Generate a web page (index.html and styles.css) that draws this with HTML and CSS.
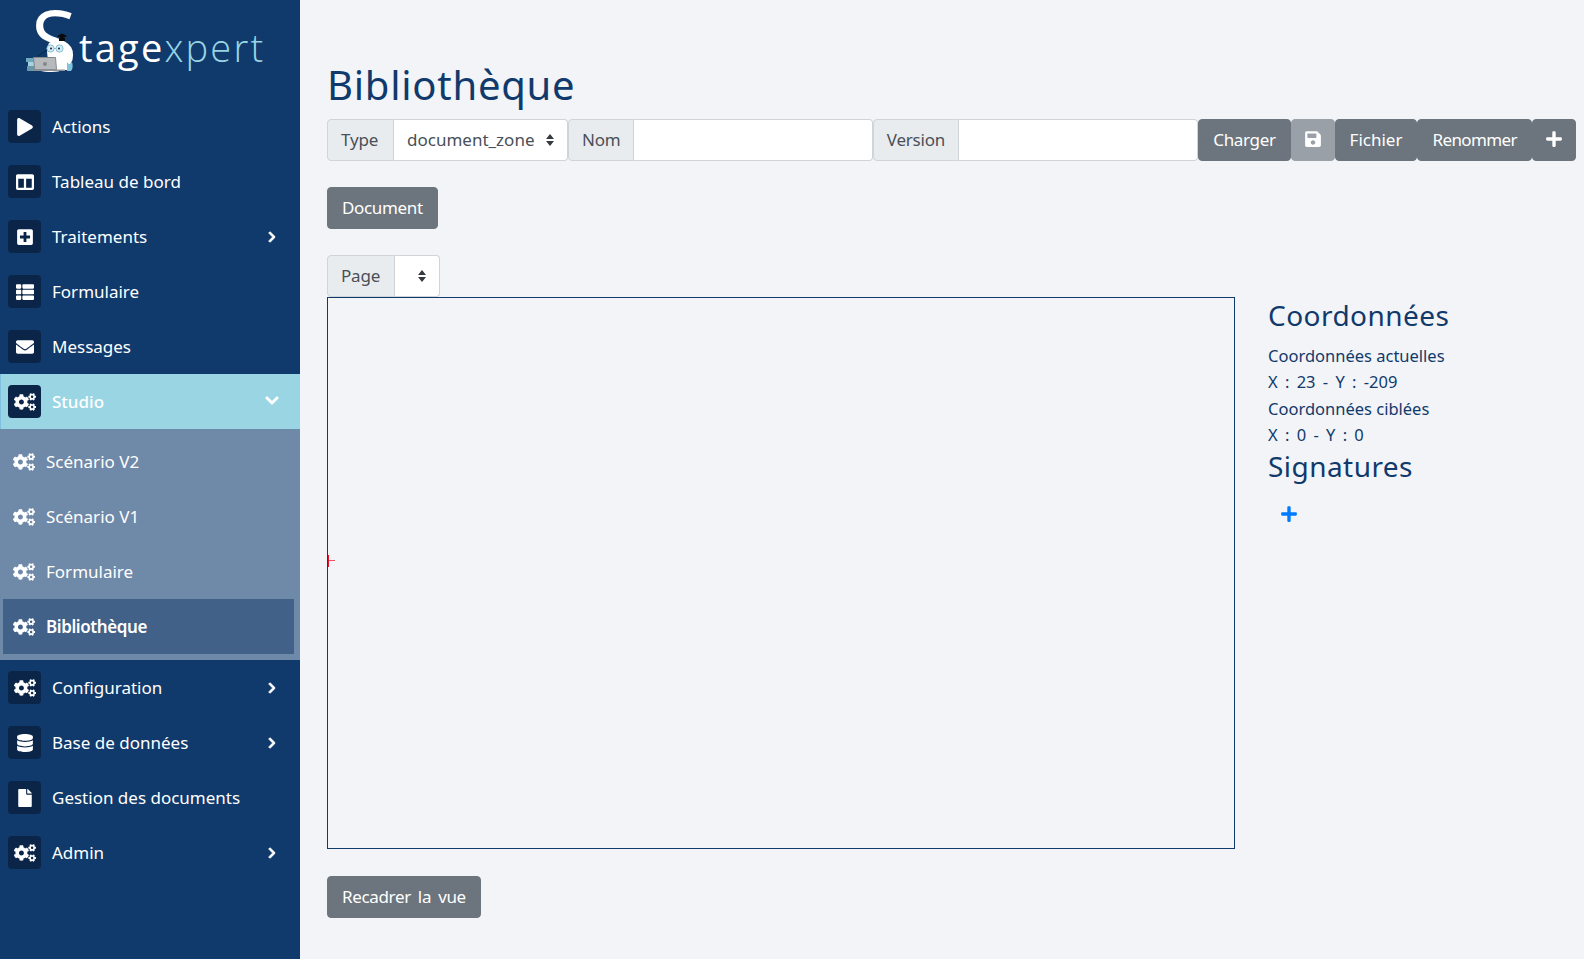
FILE: index.html
```html
<!DOCTYPE html>
<html lang="fr">
<head>
<meta charset="utf-8">
<title>Bibliothèque</title>
<link rel="stylesheet" href="styles.css">
</head>
<body>
<svg class="defs" width="0" height="0" aria-hidden="true">
  <symbol id="i-play" viewBox="0 0 448 512"><path d="M424.4 214.7L72.4 6.6C43.8-10.3 0 6.1 0 47.9V464c0 37.5 40.7 60.1 72.4 41.3l352-208c31.4-18.5 31.5-64.1 0-82.6z"/></symbol>
  <symbol id="i-columns" viewBox="0 0 512 512"><path d="M464 32H48C21.49 32 0 53.49 0 80v352c0 26.51 21.49 48 48 48h416c26.51 0 48-21.49 48-48V80c0-26.51-21.49-48-48-48zM224 416H64V160h160v256zm224 0H288V160h160v256z"/></symbol>
  <symbol id="i-plus-square" viewBox="0 0 448 512"><path d="M400 32H48C21.5 32 0 53.5 0 80v352c0 26.5 21.5 48 48 48h352c26.5 0 48-21.5 48-48V80c0-26.5-21.5-48-48-48zm-32 252c0 6.6-5.4 12-12 12h-92v92c0 6.6-5.4 12-12 12h-56c-6.6 0-12-5.4-12-12v-92H92c-6.6 0-12-5.4-12-12v-56c0-6.6 5.4-12 12-12h92v-92c0-6.6 5.4-12 12-12h56c6.6 0 12 5.4 12 12v92h92c6.6 0 12 5.4 12 12v56z"/></symbol>
  <symbol id="i-list" viewBox="0 0 512 512"><path d="M149.333 216v80c0 13.255-10.745 24-24 24H24c-13.255 0-24-10.745-24-24v-80c0-13.255 10.745-24 24-24h101.333c13.255 0 24 10.745 24 24zM0 376v80c0 13.255 10.745 24 24 24h101.333c13.255 0 24-10.745 24-24v-80c0-13.255-10.745-24-24-24H24c-13.255 0-24 10.745-24 24zM125.333 32H24C10.745 32 0 42.745 0 56v80c0 13.255 10.745 24 24 24h101.333c13.255 0 24-10.745 24-24V56c0-13.255-10.745-24-24-24zm80 448H488c13.255 0 24-10.745 24-24v-80c0-13.255-10.745-24-24-24H205.333c-13.255 0-24 10.745-24 24v80c0 13.255 10.745 24 24 24zm-24-424v80c0 13.255 10.745 24 24 24H488c13.255 0 24-10.745 24-24V56c0-13.255-10.745-24-24-24H205.333c-13.255 0-24 10.745-24 24zm24 264H488c13.255 0 24-10.745 24-24v-80c0-13.255-10.745-24-24-24H205.333c-13.255 0-24 10.745-24 24v80c0 13.255 10.745 24 24 24z"/></symbol>
  <symbol id="i-envelope" viewBox="0 0 512 512"><path d="M502.3 190.8c3.9-3.1 9.7-.2 9.7 4.7V400c0 26.5-21.5 48-48 48H48c-26.5 0-48-21.5-48-48V195.6c0-5 5.7-7.8 9.7-4.7 22.4 17.4 52.1 39.5 154.1 113.6 21.1 15.4 56.7 47.8 92.2 47.6 35.7.3 72-32.8 92.3-47.6 102-74.1 131.6-96.3 154-113.7zM256 320c23.2.4 56.6-29.2 73.4-41.4 132.7-96.3 142.8-104.7 173.4-128.7 5.8-4.5 9.2-11.5 9.2-18.9v-19c0-26.5-21.5-48-48-48H48C21.5 64 0 85.5 0 112v19c0 7.4 3.4 14.3 9.2 18.9 30.6 23.9 40.7 32.4 173.4 128.7 16.8 12.2 50.2 41.8 73.4 41.4z"/></symbol>
  <symbol id="i-cogs" viewBox="0 0 640 512"><path d="M512.1 191l-8.2 14.3c-3 5.3-9.4 7.5-15.1 5.4-11.8-4.4-22.6-10.7-32.1-18.6-4.6-3.8-5.8-10.5-2.8-15.7l8.2-14.3c-6.9-8-12.3-17.3-15.9-27.4h-16.5c-6 0-11.2-4.3-12.2-10.3-2-12-2.1-24.6 0-37.1 1-6 6.2-10.4 12.2-10.4h16.5c3.6-10.1 9-19.4 15.9-27.4l-8.2-14.3c-3-5.2-1.9-11.9 2.8-15.7 9.5-7.9 20.4-14.2 32.1-18.6 5.7-2.1 12.1.1 15.1 5.4l8.2 14.3c10.5-1.9 21.2-1.9 31.7 0L552 6.3c3-5.3 9.4-7.5 15.1-5.4 11.8 4.4 22.6 10.7 32.1 18.6 4.6 3.8 5.8 10.5 2.8 15.7l-8.2 14.3c6.9 8 12.3 17.3 15.9 27.4h16.5c6 0 11.2 4.3 12.2 10.3 2 12 2.1 24.6 0 37.1-1 6-6.2 10.4-12.2 10.4h-16.5c-3.6 10.1-9 19.4-15.9 27.4l8.2 14.3c3 5.2 1.9 11.9-2.8 15.7-9.5 7.9-20.4 14.2-32.1 18.6-5.7 2.1-12.1-.1-15.1-5.4l-8.2-14.3c-10.4 1.9-21.2 1.9-31.7 0zm-10.5-58.8c38.5 29.6 82.4-14.3 52.8-52.8-38.5-29.7-82.4 14.3-52.8 52.8zM386.3 286.1l33.7 16.8c10.1 5.8 14.5 18.1 10.5 29.1-8.9 24.2-26.4 46.4-42.6 65.8-7.4 8.9-20.2 11.1-30.3 5.3l-29.1-16.8c-16 13.7-34.6 24.6-54.9 31.7v33.6c0 11.6-8.3 21.6-19.7 23.6-24.6 4.2-50.4 4.4-75.9 0-11.5-2-20-11.9-20-23.6V418c-20.3-7.2-38.9-18-54.9-31.7L74 403c-10 5.8-22.9 3.6-30.3-5.3-16.2-19.4-33.3-41.6-42.2-65.7-4-10.9.4-23.2 10.5-29.1l33.3-16.8c-3.9-20.9-3.9-42.4 0-63.4L12 205.8c-10.1-5.8-14.6-18.1-10.5-29 8.9-24.2 26-46.4 42.2-65.8 7.4-8.9 20.2-11.1 30.3-5.3l29.1 16.8c16-13.7 34.6-24.6 54.9-31.7V57.1c0-11.5 8.2-21.5 19.6-23.5 24.6-4.2 50.5-4.4 76-.1 11.5 2 20 11.9 20 23.6v33.6c20.3 7.2 38.9 18 54.9 31.7l29.1-16.8c10-5.8 22.9-3.6 30.3 5.3 16.2 19.4 33.2 41.6 42.1 65.8 4 10.9.1 23.2-10 29.1l-33.7 16.8c3.9 21 3.9 42.5 0 63.5zm-117.6 21.1c59.2-77-28.7-164.9-105.7-105.7-59.2 77 28.7 164.9 105.7 105.7zm243.4 182.7l-8.2 14.3c-3 5.3-9.4 7.5-15.1 5.4-11.8-4.4-22.6-10.7-32.1-18.6-4.6-3.8-5.8-10.5-2.8-15.7l8.2-14.3c-6.9-8-12.3-17.3-15.9-27.4h-16.5c-6 0-11.2-4.3-12.2-10.3-2-12-2.1-24.6 0-37.1 1-6 6.2-10.4 12.2-10.4h16.5c3.6-10.1 9-19.4 15.9-27.4l-8.2-14.3c-3-5.2-1.9-11.9 2.8-15.7 9.5-7.9 20.4-14.2 32.1-18.6 5.7-2.1 12.1.1 15.1 5.4l8.2 14.3c10.5-1.9 21.2-1.9 31.7 0l8.2-14.3c3-5.3 9.4-7.5 15.1-5.4 11.8 4.4 22.6 10.7 32.1 18.6 4.6 3.8 5.8 10.5 2.8 15.7l-8.2 14.3c6.9 8 12.3 17.3 15.9 27.4h16.5c6 0 11.2 4.3 12.2 10.3 2 12 2.1 24.6 0 37.1-1 6-6.2 10.4-12.2 10.4h-16.5c-3.6 10.1-9 19.4-15.9 27.4l8.2 14.3c3 5.2 1.9 11.9-2.8 15.7-9.5 7.9-20.4 14.2-32.1 18.6-5.7 2.1-12.1-.1-15.1-5.4l-8.2-14.3c-10.4 1.9-21.2 1.9-31.7 0zM501.6 431c38.5 29.6 82.4-14.3 52.8-52.8-38.5-29.6-82.4 14.3-52.8 52.8z"/></symbol>
  <symbol id="i-database" viewBox="0 0 448 512"><path d="M448 73.143v45.714C448 159.143 347.667 192 224 192S0 159.143 0 118.857V73.143C0 32.857 100.333 0 224 0s224 32.857 224 73.143zM448 176v102.857C448 319.143 347.667 352 224 352S0 319.143 0 278.857V176c48.125 33.143 136.208 48.572 224 48.572S399.874 209.143 448 176zm0 160v102.857C448 479.143 347.667 512 224 512S0 479.143 0 438.857V336c48.125 33.143 136.208 48.572 224 48.572S399.874 369.143 448 336z"/></symbol>
  <symbol id="i-file" viewBox="0 0 384 512"><path d="M224 136V0H24C10.7 0 0 10.7 0 24v464c0 13.3 10.7 24 24 24h336c13.3 0 24-10.7 24-24V160H248c-13.2 0-24-10.8-24-24zm160-14.1v6.1H256V0h6.1c6.4 0 12.5 2.5 17 7l97.9 98c4.5 4.5 7 10.6 7 16.9z"/></symbol>
  <symbol id="i-save" viewBox="0 0 448 512"><path d="M433.941 129.941l-83.882-83.882A48 48 0 0 0 316.118 32H48C21.49 32 0 53.49 0 80v352c0 26.51 21.49 48 48 48h352c26.51 0 48-21.49 48-48V163.882a48 48 0 0 0-14.059-33.941zM224 416c-35.346 0-64-28.654-64-64 0-35.346 28.654-64 64-64s64 28.654 64 64c0 35.346-28.654 64-64 64zm96-304.52V212c0 6.627-5.373 12-12 12H76c-6.627 0-12-5.373-12-12V108c0-6.627 5.373-12 12-12h228.52c3.183 0 6.235 1.264 8.485 3.515l3.48 3.48A11.996 11.996 0 0 1 320 111.48z"/></symbol>
  <symbol id="i-plus" viewBox="0 0 448 512"><path d="M416 208H272V64c0-17.67-14.33-32-32-32h-32c-17.67 0-32 14.33-32 32v144H32c-17.67 0-32 14.33-32 32v32c0 17.67 14.33 32 32 32h144v144c0 17.67 14.33 32 32 32h32c17.67 0 32-14.33 32-32V304h144c17.67 0 32-14.33 32-32v-32c0-17.67-14.33-32-32-32z"/></symbol>
  <symbol id="i-right" viewBox="0 0 320 512"><path d="M285.476 272.971L91.132 467.314c-9.373 9.373-24.569 9.373-33.941 0l-22.667-22.667c-9.357-9.357-9.375-24.522-.04-33.901L188.505 256 34.484 101.255c-9.335-9.379-9.317-24.544.04-33.901l22.667-22.667c9.373-9.373 24.569-9.373 33.941 0L285.475 239.03c9.373 9.372 9.373 24.568.001 33.941z"/></symbol>
  <symbol id="i-down" viewBox="0 0 448 512"><path d="M207.029 381.476L12.686 187.132c-9.373-9.373-9.373-24.569 0-33.941l22.667-22.667c9.357-9.357 24.522-9.375 33.901-.04L224 284.505l154.745-154.021c9.379-9.335 24.544-9.317 33.901.04l22.667 22.667c9.373 9.373 9.373 24.569 0 33.941L240.971 381.476c-9.373 9.372-24.569 9.372-33.942 0z"/></symbol>
</svg>

<div class="app">
  <nav class="sidebar">
    <a class="logo" href="#">
      <span class="logo-s">S</span><span class="logo-white">tage</span><span class="logo-blue">xpert</span>
      <svg class="mascot" viewBox="25 33 50 40" aria-hidden="true">
        <rect x="26" y="58" width="9" height="4" fill="#6fa9bd"/>
        <rect x="28" y="62" width="6" height="4" fill="#a9d3df"/>
        <rect x="27" y="66" width="7" height="5" fill="#6b97a8"/>
        <path d="M38 56 L47 50" stroke="#0a2548" stroke-width="1" fill="none"/>
        <path d="M49 43 C54 40 62 41 65 46 C69 52 69 62 67 70 L52 70 C48 62 45 50 49 43 Z" fill="#fff"/>
        <circle cx="50.5" cy="48.5" r="3.6" fill="#d6ecf4" stroke="#86bed2"/>
        <circle cx="59.5" cy="48.5" r="3.6" fill="#d6ecf4" stroke="#86bed2"/>
        <path d="M54 48.5 h2" stroke="#86bed2"/>
        <circle cx="51" cy="48.5" r="1" fill="#0a2548"/>
        <circle cx="59" cy="48.5" r="1" fill="#0a2548"/>
        <path d="M57 36 L62 33.5 L67 36 L62 38.5 Z" fill="#0a0a0a"/>
        <path d="M59 38 h6 v3 h-6 z" fill="#0a0a0a"/>
        <path d="M33.500 57.500 h22 l1 12 h-22 z" fill="#b7babd" stroke="#84888c"/>
        <rect x="34" y="69.500" width="31" height="1.500" fill="#8d9196"/>
        <circle cx="45" cy="64" r="2" fill="#84888c"/>
        <path d="M67 62 C68 64 70 65 72 62 C73 65 73 69 71 71 L67 71 Z" fill="#7fc4dc"/>
      </svg>
    </a>
    <ul class="menu">
      <li class="item"><span class="badge"><svg class="ic"><use href="#i-play"/></svg></span><span class="label">Actions</span></li>
      <li class="item"><span class="badge"><svg class="ic"><use href="#i-columns"/></svg></span><span class="label">Tableau de bord</span></li>
      <li class="item"><span class="badge"><svg class="ic"><use href="#i-plus-square"/></svg></span><span class="label">Traitements</span><svg class="chev"><use href="#i-right"/></svg></li>
      <li class="item"><span class="badge"><svg class="ic"><use href="#i-list"/></svg></span><span class="label">Formulaire</span></li>
      <li class="item"><span class="badge"><svg class="ic"><use href="#i-envelope"/></svg></span><span class="label">Messages</span></li>
      <li class="item item-open"><span class="badge"><svg class="ic"><use href="#i-cogs"/></svg></span><span class="label">Studio</span><svg class="chev chev-down"><use href="#i-down"/></svg></li>
      <li class="submenu">
        <div class="sub"><svg class="ic"><use href="#i-cogs"/></svg><span>Scénario V2</span></div>
        <div class="sub"><svg class="ic"><use href="#i-cogs"/></svg><span>Scénario V1</span></div>
        <div class="sub"><svg class="ic"><use href="#i-cogs"/></svg><span>Formulaire</span></div>
        <div class="sub sub-active"><svg class="ic"><use href="#i-cogs"/></svg><span>Bibliothèque</span></div>
      </li>
      <li class="item"><span class="badge"><svg class="ic"><use href="#i-cogs"/></svg></span><span class="label">Configuration</span><svg class="chev"><use href="#i-right"/></svg></li>
      <li class="item"><span class="badge"><svg class="ic"><use href="#i-database"/></svg></span><span class="label">Base de données</span><svg class="chev"><use href="#i-right"/></svg></li>
      <li class="item"><span class="badge"><svg class="ic"><use href="#i-file"/></svg></span><span class="label">Gestion des documents</span></li>
      <li class="item"><span class="badge"><svg class="ic"><use href="#i-cogs"/></svg></span><span class="label">Admin</span><svg class="chev"><use href="#i-right"/></svg></li>
    </ul>
  </nav>

  <main class="main">
    <h1 class="title">Bibliothèque</h1>
    <div class="toolbar">
      <span class="addon addon-wide">Type</span>
      <select class="field select select-type"><option>document_zone</option></select>
      <span class="addon addon-tight">Nom</span>
      <input class="field text" type="text">
      <span class="addon">Version</span>
      <input class="field text" type="text">
      <button class="btn" type="button">Charger</button>
      <button class="btn btn-icon btn-disabled" type="button"><svg class="btn-ic"><use href="#i-save"/></svg></button>
      <button class="btn btn-loose" type="button">Fichier</button>
      <button class="btn btn-dense" type="button">Renommer</button>
      <button class="btn btn-icon" type="button"><svg class="btn-ic"><use href="#i-plus"/></svg></button>
    </div>
    <div class="doc-row"><button class="btn" type="button">Document</button></div>
    <div class="page-row">
      <span class="addon addon-page">Page</span>
      <select class="field select select-page"></select>
    </div>
    <div class="workspace">
      <div class="canvas"><span class="cross"></span></div>
      <aside class="panel">
        <h2>Coordonnées</h2>
        <p>Coordonnées actuelles</p>
        <p class="coord">X : 23 - Y : -209</p>
        <p>Coordonnées ciblées</p>
        <p class="coord">X : 0 - Y : 0</p>
        <h2 class="h-sign">Signatures</h2>
        <button class="add" type="button"><svg class="add-ic"><use href="#i-plus"/></svg></button>
      </aside>
    </div>
    <div class="recadrer"><button class="btn" type="button">Recadrer la vue</button></div>
  </main>
</div>
</body>
</html>
```

FILE: styles.css
```css
* { box-sizing: border-box; }
html, body { margin: 0; height: 100%; }
body {
  background: #f2f4f8;
  font-family: "Noto Sans", "Open Sans", sans-serif;
  font-size: 17px;
  color: #103a6b;
  overflow: hidden;
}
.defs { position: absolute; }
.app { display: flex; height: 959px; }

/* Sidebar */
.sidebar { width: 300px; flex: none; background: #103a6b; color: #fff; }
.logo {
  position: relative;
  display: flex;
  align-items: flex-start;
  height: 99px;
  padding: 22px 0 0 79px;
  text-decoration: none;
  font-family: "Open Sans", sans-serif;
  font-size: 38px;
  line-height: 50px;
  letter-spacing: 2.2px;
}
.logo-s {
  position: absolute;
  left: 31px;
  top: 4px;
  font-size: 84px;
  line-height: 70px;
  letter-spacing: 0;
  color: #fff;
}
.logo-white { color: #fff; }
.logo-blue { color: #98d4e3; font-weight: 300; }
.mascot { position: absolute; left: 25px; top: 33px; width: 50px; height: 40px; overflow: visible; }
.menu { list-style: none; margin: 0; padding: 0; }
.item {
  display: flex;
  align-items: center;
  height: 55px;
  padding: 0 23px 0 8px;
}
.badge {
  width: 33px;
  height: 33px;
  border-radius: 4px;
  background: #0a2548;
  display: flex;
  align-items: center;
  justify-content: center;
  flex: none;
}
.ic { width: 22px; height: 18px; fill: #fff; }
.label { margin-left: 11px; flex: 1; }
.chev { width: 10px; height: 12px; fill: #fff; stroke: #fff; stroke-width: 40; }
.chev-down { width: 14px; height: 15px; margin-right: -2px; margin-top: -2px; stroke-width: 20; }
.item-open { background: #99d5e3; border-left: 1px solid #7fbfe0; padding-left: 7px; font-weight: 500; }
.submenu {
  background: #6f89a8;
  height: 231px;
  display: flex;
  flex-direction: column;
  padding: 0 6px 6px 3px;
}
.sub { display: flex; align-items: center; height: 55px; padding-left: 10px; gap: 11px; }
.sub:first-child { margin-top: 5px; }
.sub-active { background: #416189; font-weight: 600; letter-spacing: -0.4px; }

/* Main */
.main { flex: 1; min-width: 0; padding: 59px 8px 0 27px; }
.title { margin: 0; font-size: 40px; font-weight: 400; line-height: 52px; color: #103a6b; height: 60px; letter-spacing: 0.75px; }
.toolbar, .page-row { display: flex; height: 42px; }
.addon, .field, .btn { font: inherit; height: 42px; }
.addon {
  display: flex;
  align-items: center;
  padding: 0 13px 2px;
  background: #e9ecef;
  border: 1px solid #ced4da;
  border-radius: 4px 0 0 4px;
  color: #495057;
  letter-spacing: -0.2px;
}
.addon-wide { padding-right: 15px; }
.addon-tight { padding-right: 12px; }
.addon-page { padding-right: 14px; }
.field {
  border: 1px solid #ced4da;
  border-left: 0;
  border-radius: 0 4px 4px 0;
  background-color: #fff;
  color: #495057;
  outline: none;
}
.text { flex: 1; min-width: 0; }
.select {
  appearance: none;
  -webkit-appearance: none;
  padding: 0 24px 2px 13px;
  background-image: url("data:image/svg+xml,%3csvg xmlns='http://www.w3.org/2000/svg' width='8' height='12' viewBox='0 0 8 12'%3e%3cpath fill='%23343a40' d='M4 0L0 5h8zM4 12L0 7h8z'/%3e%3c/svg%3e");
  background-repeat: no-repeat;
  background-position: right 13px center;
  background-size: 8px 12px;
}
.select-type { width: 174px; }
.select-page { width: 45px; }
.btn {
  display: inline-flex;
  align-items: center;
  justify-content: center;
  padding: 0 14px 2px;
  background: #6c757d;
  color: #fff;
  border: 1px solid #6c757d;
  border-radius: 4px;
  letter-spacing: -0.35px;
  word-spacing: 3px;
}
.btn-icon { padding: 0 13px 2px; }
.btn-loose { letter-spacing: 0; }
.btn-dense { letter-spacing: -0.6px; }
.btn-disabled { background: #9aa0a8; border-color: #9aa0a8; }
.btn-ic { width: 16px; height: 18px; fill: #fff; }
.doc-row { margin-top: 26px; height: 42px; }
.page-row { margin-top: 26px; }
.workspace { display: flex; }
.canvas {
  position: relative;
  width: 908px;
  height: 552px;
  border: 1px solid #103a6b;
  flex: none;
}
.cross { position: absolute; left: 0; top: 257px; width: 7px; height: 12px; border-left: 1px solid #e8142e; }
.cross::after { content: ""; position: absolute; left: 0; top: 5px; width: 6px; height: 1px; background: #f0505f; }
.panel { margin-left: 33px; }
.panel h2 { margin: 0; font-size: 28px; font-weight: 400; line-height: 36px; letter-spacing: 0.45px; }
.panel p { margin: 0; font-size: 16.5px; line-height: 26.4px; }
.panel h2 + p { margin-top: 10px; }
.panel .h-sign { margin-top: -1px; }
.panel .coord { word-spacing: 3px; }
.add { display: block; margin: 15px 0 0; padding: 6px 13px; border: 0; background: none; }
.add-ic { display: block; width: 16px; height: 18px; fill: #007bff; }
.recadrer { margin-top: 27px; }
```
